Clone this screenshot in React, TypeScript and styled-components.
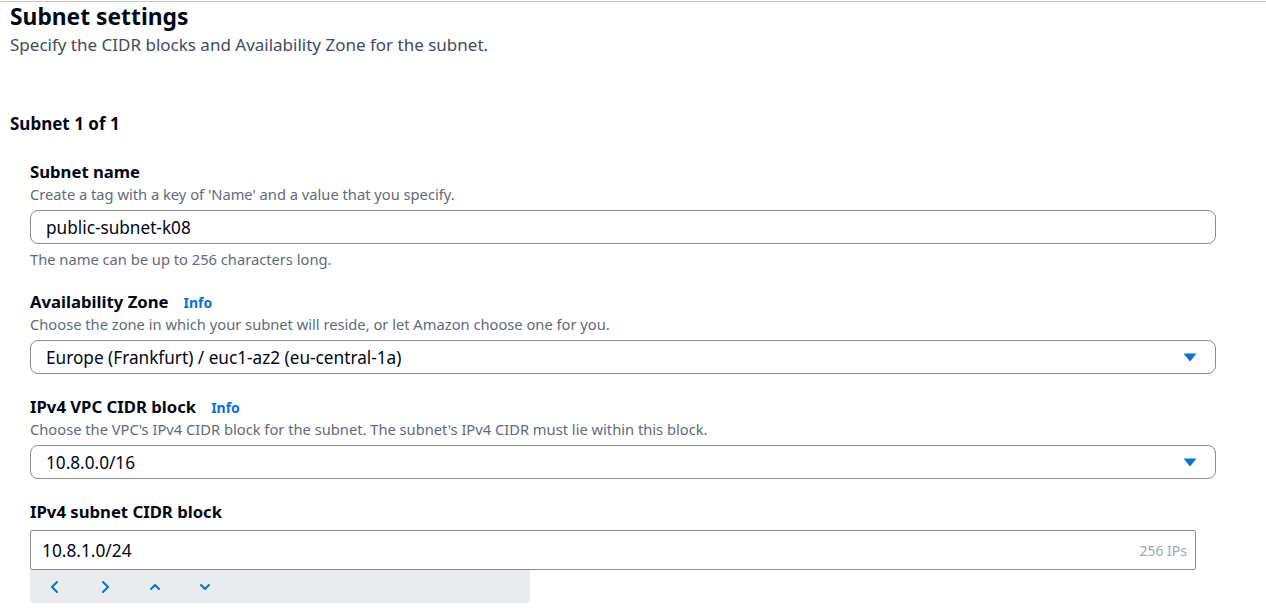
import React from "react"
import styled, { createGlobalStyle } from "styled-components"

const GlobalStyle = createGlobalStyle`
  html, body {
    margin: 0;
    padding: 0;
    background: #ffffff;
  }
  body {
    font-family: "Noto Sans", "Open Sans", Arial, sans-serif;
    color: #000716;
  }
  * {
    box-sizing: border-box;
  }
`

const Page = styled.div`
  margin-top: 1px;
  border-top: 1px solid #c6c6cd;
  padding: 0 0 12px 10px;
`

const Header = styled.header`
  display: flex;
  flex-direction: column;
`

const Title = styled.h2`
  margin: 0;
  font-size: 22.8px;
  line-height: 30px;
  font-weight: 700;
  color: #000716;
`

const Subtitle = styled.p`
  margin: 0;
  font-size: 17px;
  line-height: 26px;
  color: #414d5c;
`

const SubnetHeading = styled.h3`
  margin: 55px 0 0;
  font-size: 17px;
  line-height: 22px;
  font-weight: 700;
`

const Fields = styled.div`
  display: flex;
  flex-direction: column;
  gap: 22px;
  padding: 26px 0 0 20px;
  width: 1206px;
`

const Field = styled.div`
  display: flex;
  flex-direction: column;
`

const LabelRow = styled.div`
  display: flex;
  align-items: baseline;
  gap: 15px;
`

const Label = styled.label`
  font-size: 16.7px;
  line-height: 22px;
  font-weight: 700;
`

const InfoLink = styled.a`
  font-size: 14px;
  font-weight: 700;
  color: #0972d3;
  text-decoration: none;
`

const Description = styled.div`
  font-size: 14.7px;
  line-height: 20px;
  color: #5f6b7a;
  margin-top: 1px;
`

const Box = styled.div`
  display: flex;
  align-items: center;
  justify-content: space-between;
  height: 34px;
  margin-top: 6px;
  padding: 0 18px 0 15px;
  border: 1px solid #8c8c94;
  border-radius: 8px;
  font-size: 17.2px;
  color: #000716;
  background: #fff;
`

const Hint = styled.div`
  font-size: 14.7px;
  line-height: 20px;
  color: #5f6b7a;
  margin-top: 5px;
`

const CidrInput = styled.div`
  display: flex;
  align-items: center;
  justify-content: space-between;
  width: 1166px;
  height: 40px;
  margin-top: 7px;
  padding: 0 8px 0 11px;
  border: 1px solid #8c8c94;
  border-radius: 2px;
  font-size: 17.3px;
`

const Suffix = styled.span`
  font-size: 14px;
  color: #9ba7b6;
`

const Stepper = styled.div`
  display: flex;
  width: 500px;
  height: 33px;
  background: #e9ebed;
  border-radius: 0 0 4px 4px;
`

const StepButton = styled.button`
  width: 50px;
  height: 100%;
  display: flex;
  align-items: center;
  justify-content: center;
  border: none;
  background: transparent;
  padding: 0;
  color: #0972d3;
`

const Caret = () => (
  <svg width="14" height="9" viewBox="0 0 14 9">
    <path d="M0.5 0.5 H13.5 L7 8.5 Z" fill="#0972d3" />
  </svg>
)

const chevrons: Record<string, string> = {
  left: "M9 2 L4 7 L9 12",
  right: "M5 2 L10 7 L5 12",
  up: "M3 9 L7 5 L11 9",
  down: "M3 5 L7 9 L11 5",
}

const Chevron = ({ dir }: { dir: string }) => (
  <svg width="14" height="14" viewBox="0 0 14 14">
    <path d={chevrons[dir]} fill="none" stroke="currentColor" strokeWidth="2" strokeLinecap="round" strokeLinejoin="round" />
  </svg>
)

export default function App() {
  return (
    <>
      <GlobalStyle />
      <Page>
        <Header>
          <Title>Subnet settings</Title>
          <Subtitle>Specify the CIDR blocks and Availability Zone for the subnet.</Subtitle>
        </Header>
        <SubnetHeading>Subnet 1 of 1</SubnetHeading>
        <Fields>
          <Field>
            <Label>Subnet name</Label>
            <Description>Create a tag with a key of 'Name' and a value that you specify.</Description>
            <Box>public-subnet-k08</Box>
            <Hint>The name can be up to 256 characters long.</Hint>
          </Field>
          <Field>
            <LabelRow>
              <Label>Availability Zone</Label>
              <InfoLink>Info</InfoLink>
            </LabelRow>
            <Description>Choose the zone in which your subnet will reside, or let Amazon choose one for you.</Description>
            <Box>
              <span>Europe (Frankfurt) / euc1-az2 (eu-central-1a)</span>
              <Caret />
            </Box>
          </Field>
          <Field>
            <LabelRow>
              <Label>IPv4 VPC CIDR block</Label>
              <InfoLink>Info</InfoLink>
            </LabelRow>
            <Description>Choose the VPC's IPv4 CIDR block for the subnet. The subnet's IPv4 CIDR must lie within this block.</Description>
            <Box>
              <span>10.8.0.0/16</span>
              <Caret />
            </Box>
          </Field>
          <Field>
            <Label>IPv4 subnet CIDR block</Label>
            <CidrInput>
              <span>10.8.1.0/24</span>
              <Suffix>256 IPs</Suffix>
            </CidrInput>
            <Stepper>
              <StepButton><Chevron dir="left" /></StepButton>
              <StepButton><Chevron dir="right" /></StepButton>
              <StepButton><Chevron dir="up" /></StepButton>
              <StepButton><Chevron dir="down" /></StepButton>
            </Stepper>
          </Field>
        </Fields>
      </Page>
    </>
  )
}
